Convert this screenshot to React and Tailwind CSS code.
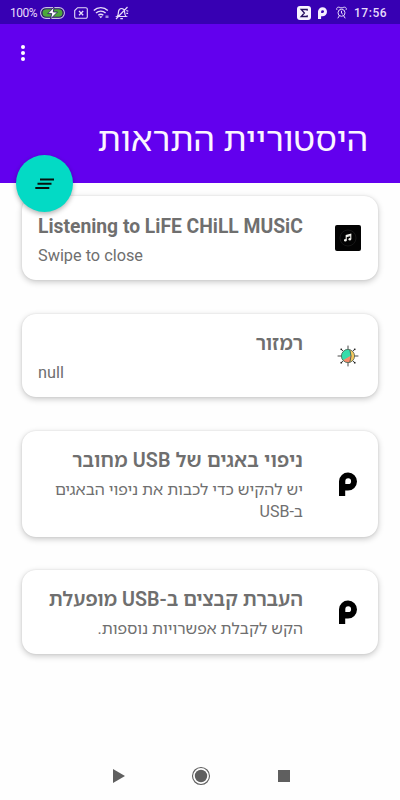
const FONT = "font-['Roboto','Noto_Sans_Hebrew','Open_Sans',sans-serif]";

function MusicIcon() {
  return (
    <svg width="26" height="26" viewBox="0 0 26 26">
      <rect width="26" height="26" rx="2" fill="#030303" />
      <circle cx="13" cy="13" r="8" fill="none" stroke="#171717" />
      <path d="M11.2 15.2v-4.8l4.6-1.1v4.8M11.2 11.6l4.6-1.1" fill="none" stroke="#f3f3ee" strokeWidth="1.1" />
      <circle cx="10.3" cy="15.3" r="1.3" fill="#f3f3ee" />
      <circle cx="14.8" cy="14.3" r="1.3" fill="#f3f3ee" />
    </svg>
  );
}

function VirusIcon() {
  return (
    <svg width="26" height="26" viewBox="0 0 26 26">
      <g stroke="#333" strokeWidth="0.9" strokeLinecap="round">
        <path d="M13 3v20M3 13h20M6.2 6.2l13.6 13.6M19.8 6.2L6.2 19.8" />
      </g>
      <g fill="#222">
        <circle cx="6.3" cy="6.3" r="0.9" />
        <circle cx="19.7" cy="6.3" r="0.9" />
        <circle cx="6.3" cy="19.7" r="0.9" />
        <circle cx="19.7" cy="19.7" r="0.9" />
      </g>
      <circle cx="13" cy="13" r="6.6" fill="#f5c95f" />
      <path d="M14.8 6.7A6.6 6.6 0 1 0 14.8 19.3Q17.4 13 14.8 6.7z" fill="#35dcab" />
      <path d="M16 12.5L8 17.3A6.6 6.6 0 0 0 14.8 19.3Q16.5 15 16 12.5z" fill="#f58b6c" />
      <path d="M14.8 6.7Q17.4 13 14.8 19.3" fill="none" stroke="#41514a" strokeWidth="0.8" />
      <circle cx="13" cy="13" r="6.6" fill="none" stroke="#41514a" strokeWidth="0.7" />
    </svg>
  );
}

function PIcon({ className }) {
  return (
    <svg className={className} viewBox="0 0 18 24">
      <path
        fill="currentColor"
        fillRule="evenodd"
        d="M0 24V9.2a9 9 0 1 1 9 9.3H6.2V24zM9.2 6.3A2.9 2.9 0 0 0 6.3 9.2v2.9h2.9a2.9 2.9 0 0 0 0-5.8z"
      />
    </svg>
  );
}

function StatusBar() {
  return (
    <div className="h-6 bg-[#3700b3] flex items-center justify-between pl-[10px] pr-[13px] pt-px text-[#e6dcfa]">
      <div className="flex items-center">
        <span className="text-[12px] leading-6 w-[27px] whitespace-nowrap tracking-[-0.5px]">100%</span>
        <svg className="ml-[3px]" width="25" height="12" viewBox="0 0 25 12">
          <rect x="0.6" y="0.6" width="23.8" height="10.8" rx="5.4" fill="#271363" stroke="#c9bfe8" strokeWidth="1.1" />
          <rect x="2.5" y="2.3" width="20" height="7.4" rx="3.7" fill="#4ca83b" />
          <path d="M14 0L7.8 6.6h4L10.5 12l7-7h-4.2z" fill="#fff" stroke="#271363" strokeWidth="0.8" />
        </svg>
        <svg className="ml-[9px]" width="14" height="12" viewBox="0 0 14 12">
          <path d="M3.6.7h8.2a1.5 1.5 0 0 1 1.5 1.5v7.6a1.5 1.5 0 0 1-1.5 1.5H2.2A1.5 1.5 0 0 1 .7 9.8V3.6z" fill="none" stroke="currentColor" strokeWidth="1.1" />
          <path d="M5 4l4.2 4.2M9.2 4L5 8.2" stroke="currentColor" strokeWidth="1.3" />
        </svg>
        <svg className="ml-[5px]" width="17" height="13" viewBox="0 0 17 13">
          <g fill="none" stroke="currentColor" strokeWidth="1.4">
            <path d="M.8 4.5a10 10 0 0 1 14 0M3 7a7 7 0 0 1 9.6 0M5.3 9.3a3.7 3.7 0 0 1 5 0" />
          </g>
          <path d="M6 10.3h3.6L7.8 12.3z" fill="currentColor" />
          <path d="M12.5 9.5h3v2.5h-3z" fill="#a58ce0" />
        </svg>
        <svg className="ml-[5px]" width="14" height="14" viewBox="0 0 14 14" fill="none" stroke="currentColor" strokeWidth="1.2">
          <path d="M2 10.5c1.5-1 1.2-2.8 1.5-4.8C3.8 3.4 5 2.5 6.5 2.5S9.3 3.4 9.6 5.7c.2 2 0 3.8 1.5 4.8zM5.3 12.6h2.6M1 13L12.5 1M11.3 4.5l2 .8M11.3 7.3h1.8" />
        </svg>
      </div>
      <div className="flex items-center">
        <svg width="14" height="14" viewBox="0 0 14 14">
          <rect width="14" height="14" rx="3" fill="#f8f4ff" />
          <path d="M10.2 4.8V3.5H4.2L7.4 7l-3.2 3.5h6V9.2" fill="none" stroke="#261060" strokeWidth="1.3" />
        </svg>
        <PIcon className="ml-[7px] w-[9px] h-[12px] text-[#f5efff]" />
        <svg className="ml-[9px]" width="11" height="13" viewBox="0 0 11 13" fill="none" stroke="currentColor">
          <circle cx="5.5" cy="6.8" r="3.5" />
          <path d="M5.5 4.8v2.4l1.4 1M1 4C0 2 1.6.5 4 1.5M10 4c1-2-.6-3.5-3-2.5M3.3 9.8L1.8 12.3M7.7 9.8L9.2 12.3M4 1.8h3" />
        </svg>
        <span className="ml-[7px] w-[33px] whitespace-nowrap text-[12px] leading-6 font-medium tracking-[0.55px]">17:56</span>
      </div>
    </div>
  );
}

function Card({ title, titleClass, lines, lineClass, icon, ltr, className }) {
  return (
    <div
      className={`flex rounded-[14px] bg-white shadow-[0_2px_6px_rgba(0,0,0,0.22),0_0_2px_rgba(0,0,0,0.1)] ${className}`}
    >
      <div className="flex w-[281px] flex-col pl-4 text-[#6f6f6f]">
        <h2
          dir="auto"
          className={`h-[26px] whitespace-nowrap leading-[26px] ${titleClass}`}
        >
          {title}
        </h2>
        <div dir={ltr ? "ltr" : "rtl"} className={`mt-[5px] whitespace-nowrap ${lineClass}`}>
          {lines.map((line) => (
            <p key={line} className="h-[22px] leading-[22px]">{line}</p>
          ))}
        </div>
      </div>
      <div className="flex flex-1 items-center justify-center">
        <div className="ml-[15px] flex w-[60px] justify-center">{icon}</div>
      </div>
    </div>
  );
}

export default function App() {
  return (
    <div className={`relative flex h-[800px] w-[400px] flex-col overflow-hidden bg-[#fefefe] ${FONT}`}>
      <StatusBar />
      <header className="relative flex h-[159px] flex-col bg-[#6200ee] text-[#fbf5ff]">
        <div className="flex w-[45px] flex-col items-center gap-[2px] pt-[21px]">
          <span className="h-1 w-1 rounded-full bg-white" />
          <span className="h-1 w-1 rounded-full bg-white" />
          <span className="h-1 w-1 rounded-full bg-white" />
        </div>
        <h1 dir="rtl" className="mt-[53px] pr-8 text-[34px] leading-[50px] whitespace-nowrap font-normal">
          היסטוריית התראות
        </h1>
        <button className="absolute left-4 top-[131px] z-10 flex h-[57px] w-[57px] items-center justify-center rounded-full bg-[#03dac5] shadow-[0_2px_5px_rgba(0,0,0,0.3)]">
          <svg width="19" height="12" viewBox="0 0 19 12" fill="#07110f">
            <path d="M5 .5h14v2H5zM2.5 4.7h14v2h-14zM.3 8.9h14v2H.3z" />
          </svg>
        </button>
      </header>

      <main className="flex flex-1 flex-col px-[22px] pt-[13px]">
        <Card
          ltr
          className="h-[84px]"
          title="Listening to LiFE CHiLL MUSiC"
          titleClass="mt-[18px] text-[19.3px] font-bold"
          lines={["Swipe to close"]}
          lineClass="text-[16.3px]"
          icon={<MusicIcon />}
        />
        <Card
          className="mt-[34px] h-[83px]"
          title="רמזור"
          titleClass="mt-[17px] text-[19.7px] font-semibold"
          lines={["null"]}
          lineClass="text-[16.3px] text-left"
          icon={<VirusIcon />}
        />
        <Card
          className="mt-[34px] h-[106px]"
          title="ניפוי באגים של USB מחובר"
          titleClass="mt-[17px] text-[19.7px] font-semibold tracking-[0.15px]"
          lines={["יש להקיש כדי לכבות את ניפוי הבאגים", "ב-USB"]}
          lineClass="text-[16px]"
          icon={<PIcon className="h-6 w-[18px] text-black" />}
        />
        <Card
          className="mt-[33px] h-[84px]"
          title="העברת קבצים ב-USB מופעלת"
          titleClass="mt-[17px] text-[19.7px] font-semibold"
          lines={["הקש לקבלת אפשרויות נוספות."]}
          lineClass="text-[16px]"
          icon={<PIcon className="h-6 w-[18px] text-black" />}
        />
      </main>

      <nav className="flex h-12 items-center justify-center pl-[2px] text-[#5f5f5f]">
        <svg width="12" height="14" viewBox="0 0 12 14">
          <path d="M0 0l12 7-12 7z" fill="currentColor" />
        </svg>
        <svg className="ml-[66px]" width="20" height="20" viewBox="0 0 20 20">
          <circle cx="10" cy="10" r="8.5" fill="none" stroke="currentColor" strokeWidth="1.1" />
          <circle cx="10" cy="10" r="6.2" fill="currentColor" />
        </svg>
        <span className="ml-[67px] h-3 w-3 bg-[#5f5f5f]" />
      </nav>
    </div>
  );
}
